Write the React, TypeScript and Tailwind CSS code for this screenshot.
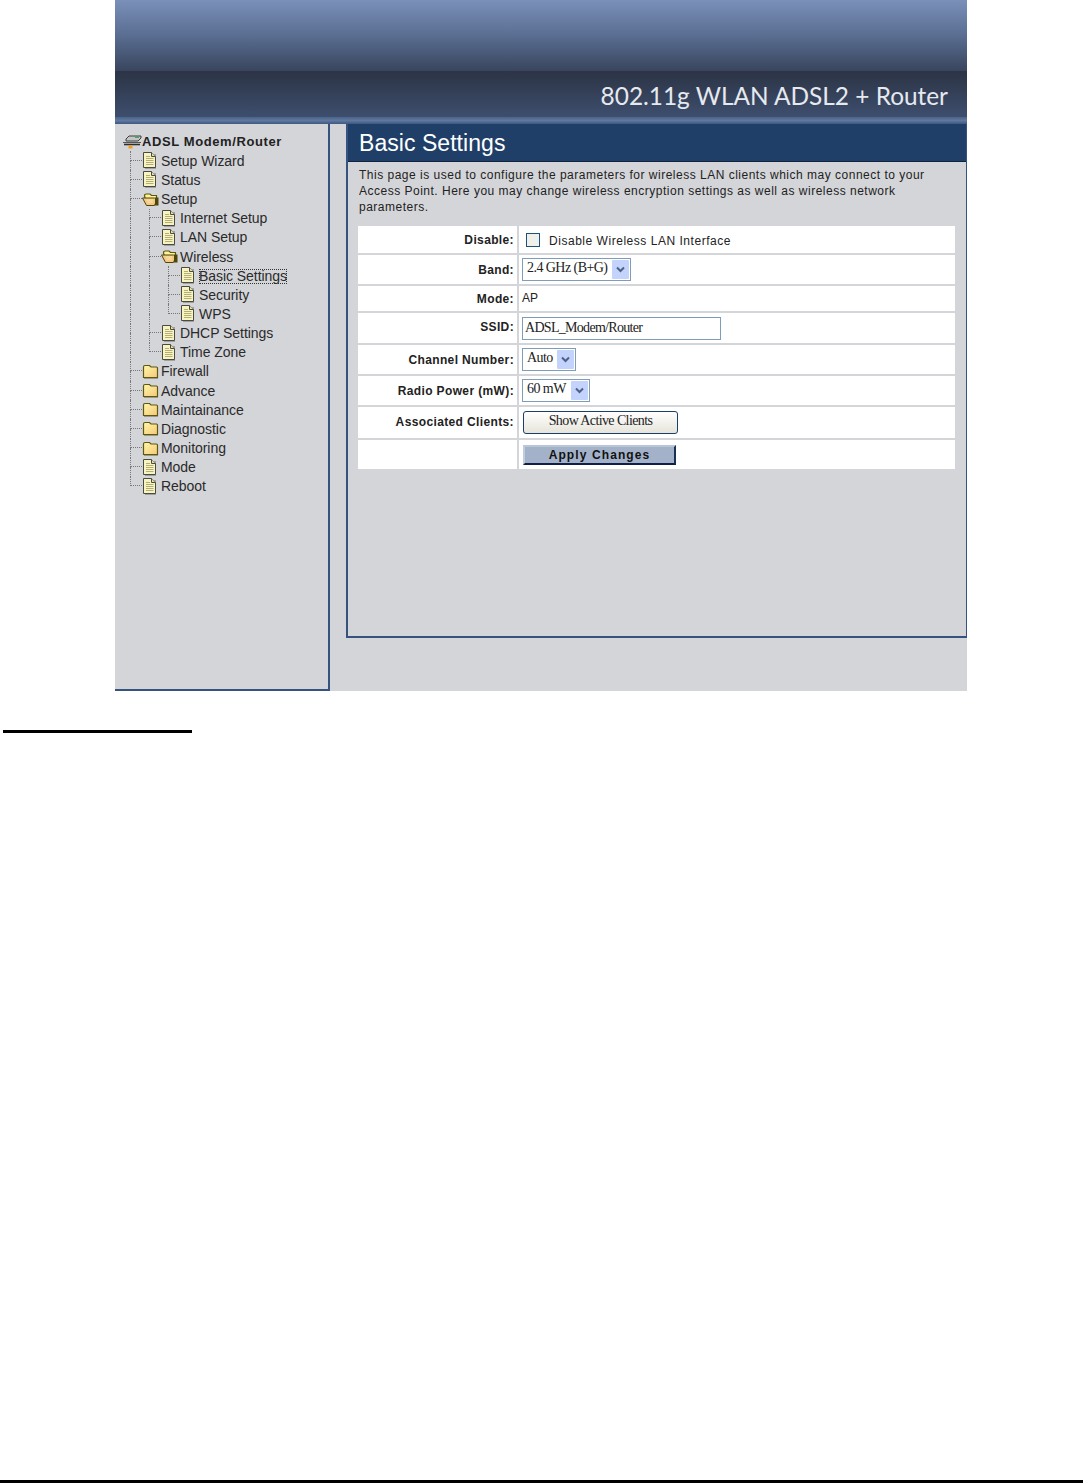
import React from 'react';

type NodeKind = 'root' | 'doc' | 'folder' | 'open';

// guides: one entry per depth, 'line' = pass through, 'tee' = branch, 'end' = last branch
type Guide = 'line' | 'tee' | 'end';

interface TreeRow {
  label: string;
  kind: NodeKind;
  guides: Guide[];
  selected?: boolean;
}

const treeRows: TreeRow[] = [
  { label: 'ADSL Modem/Router', kind: 'root', guides: [] },
  { label: 'Setup Wizard', kind: 'doc', guides: ['tee'] },
  { label: 'Status', kind: 'doc', guides: ['tee'] },
  { label: 'Setup', kind: 'open', guides: ['tee'] },
  { label: 'Internet Setup', kind: 'doc', guides: ['line', 'tee'] },
  { label: 'LAN Setup', kind: 'doc', guides: ['line', 'tee'] },
  { label: 'Wireless', kind: 'open', guides: ['line', 'tee'] },
  { label: 'Basic Settings', kind: 'doc', guides: ['line', 'line', 'tee'], selected: true },
  { label: 'Security', kind: 'doc', guides: ['line', 'line', 'tee'] },
  { label: 'WPS', kind: 'doc', guides: ['line', 'line', 'end'] },
  { label: 'DHCP Settings', kind: 'doc', guides: ['line', 'tee'] },
  { label: 'Time Zone', kind: 'doc', guides: ['line', 'end'] },
  { label: 'Firewall', kind: 'folder', guides: ['tee'] },
  { label: 'Advance', kind: 'folder', guides: ['tee'] },
  { label: 'Maintainance', kind: 'folder', guides: ['tee'] },
  { label: 'Diagnostic', kind: 'folder', guides: ['tee'] },
  { label: 'Monitoring', kind: 'folder', guides: ['tee'] },
  { label: 'Mode', kind: 'doc', guides: ['tee'] },
  { label: 'Reboot', kind: 'doc', guides: ['end'] },
];

const DocIcon = () => (
  <svg width="17" height="19" viewBox="0 0 17 19" className="shrink-0">
    <path d="M3 3H14V18H3Z" fill="#8f8f8f" opacity="0.75" />
    <path d="M1.5 1.5H9.5L13.5 5.5V16.5H1.5Z" fill="#f8f4bf" stroke="#4a4a42" strokeWidth="1" />
    <path d="M9.5 1.5V5.5H13.5" fill="#e4e0a8" stroke="#4a4a42" strokeWidth="1" />
    <path d="M4 5.5H8M4 7.5H11.5M4 9.5H11.5M4 11.5H11.5M4 13.5H11.5" stroke="#b3ae78" strokeWidth="1" />
  </svg>
);

const FolderIcon = () => (
  <svg width="17" height="19" viewBox="0 0 17 19" className="shrink-0">
    <defs>
      <linearGradient id="closedFolder" x1="0" y1="0" x2="1" y2="1">
        <stop offset="0" stopColor="#fff7a8" />
        <stop offset="1" stopColor="#f4c878" />
      </linearGradient>
    </defs>
    <path d="M1.5 5Q1.5 3.5 3 3.5H7.5L9 5H14.5Q15.5 5 15.5 6V15.5H1.5Z" fill="url(#closedFolder)" stroke="#5e5710" strokeWidth="1.2" />
    <path d="M2 16.5H16" stroke="#9a9a8a" strokeWidth="1" />
  </svg>
);

const OpenFolderIcon = () => (
  <svg width="17" height="19" viewBox="0 0 17 19" className="shrink-0">
    <path d="M2.5 6Q2.5 4 4.5 4H8L9.5 5.5H14.5V14.5H5Z" fill="#fff39a" stroke="#5e5710" strokeWidth="1.2" />
    <path d="M0.5 8H12.5L15 9.5L12.5 15.5H4.5Z" fill="#f6c886" stroke="#4d4708" strokeWidth="1" />
    <path d="M13 7.5H16.5V15.5H13Z" fill="#4d4708" />
    <path d="M4.5 10H11M5.5 12H10.5" stroke="#fbe9a6" strokeWidth="1" />
  </svg>
);

const RootIcon = () => (
  <svg width="19" height="19" viewBox="0 0 19 19" className="shrink-0">
    <path d="M3 7L6 4H18V6L15 9H3Z" fill="#c4c6c6" stroke="#3d3d3d" strokeWidth="1" />
    <rect x="12" y="5" width="4" height="1" fill="#35b34a" />
    <path d="M0 10.5H18" stroke="#555" strokeWidth="1" />
    <path d="M1 12.5H17" stroke="#2f2f2f" strokeWidth="1.6" />
    <rect x="5.5" y="13.5" width="4" height="3" fill="#f0a020" />
  </svg>
);

const GuideCell = ({ guide }: { guide: Guide }) => (
  <span className="w-[19px] shrink-0 h-full flex flex-col pl-[7px]">
    <span className={`block h-1/2 border-l border-dotted border-[#777] ${guide !== 'line' ? 'border-b' : ''}`} />
    <span className={`block h-1/2 border-dotted border-[#777] ${guide !== 'end' ? 'border-l' : ''}`} />
  </span>
);

const TreeNode = ({ row }: { row: TreeRow }) => {
  const isRoot = row.kind === 'root';
  return (
    <div className="flex items-center h-[19.17px]">
      {row.guides.map((g, i) => (
        <GuideCell key={i} guide={g} />
      ))}
      {row.kind === 'root' && <RootIcon />}
      {row.kind === 'doc' && <DocIcon />}
      {row.kind === 'folder' && <FolderIcon />}
      {row.kind === 'open' && <OpenFolderIcon />}
      <span
        className={`whitespace-nowrap leading-[15px] ${isRoot ? 'font-bold text-[13px] tracking-[0.6px] text-[#222]' : 'text-[14px] tracking-[-0.05px] text-[#2a2a2a] ml-[2px] mt-px'} ${row.selected ? 'outline outline-1 outline-dotted outline-[#333] -outline-offset-1' : ''}`}
      >
        {row.label}
      </span>
    </div>
  );
};

const SelectBox = ({ value, width }: { value: string; width: string }) => (
  <div className={`flex items-center justify-between border border-[#7f9db9] bg-white h-[23px] pl-[4px] pr-px ${width}`}>
    <span className="font-['Liberation_Serif',serif] text-[14px] tracking-[-0.55px] text-[#222] leading-none -mt-[3px] whitespace-nowrap">{value}</span>
    <span className="w-[17px] h-[19px] bg-[#c3d3fb] flex items-center justify-center rounded-[1px]">
      <svg width="9" height="7" viewBox="0 0 9 7">
        <path d="M1 1.5L4.5 5L8 1.5" fill="none" stroke="#4d6185" strokeWidth="2" />
      </svg>
    </span>
  </div>
);

const FormRow = ({
  label,
  height,
  labelClass = '',
  children,
}: {
  label?: string;
  height: string;
  labelClass?: string;
  children: React.ReactNode;
}) => (
  <div className={`flex gap-[2px] ${height}`}>
    <div className="w-[159px] shrink-0 bg-white flex items-center justify-end pr-[3px] font-bold text-[12px] tracking-[0.37px] text-[#222]">
      <span className={labelClass}>{label}</span>
    </div>
    <div className="flex-1 bg-white flex items-center pl-[3px] text-[12px] text-[#222]">{children}</div>
  </div>
);

export default function App() {
  return (
    <div className="relative h-[1483px] bg-white flex flex-col font-['Liberation_Sans',Arial,sans-serif]">
      <div className="ml-[115px] w-[852px] h-[691px] shrink-0 bg-[#d4d5d9] flex flex-col">
        {/* Banner */}
        <div className="h-[124px] shrink-0 flex flex-col">
          <div className="h-[71px] bg-gradient-to-b from-[#7b90b9] via-[#5a6e92] to-[#39455e]" />
          <div className="h-[46px] bg-gradient-to-b from-[#2c3445] to-[#3d4e6e] flex items-center justify-end pr-[19px]">
            <span className="font-['Lato',sans-serif] text-[24.4px] text-[#e6e9ee] leading-none whitespace-nowrap mt-[4px]">
              802.11g WLAN ADSL2 + Router
            </span>
          </div>
          <div className="h-[7px] bg-gradient-to-b from-[#4c6288] via-[#5f789f] to-[#3f587f]" />
        </div>

        <div className="flex flex-1 items-start">
          {/* Tree menu */}
          <div className="w-[215px] h-[567px] shrink-0 border-r-[2px] border-b-[2px] border-[#34537e] pl-[8px] pt-[8px]">
            {treeRows.map(row => (
              <TreeNode key={row.label} row={row} />
            ))}
          </div>

          {/* Settings panel */}
          <div className="ml-[16px] w-[621px] h-[514px] border-l-[2px] border-b-[2px] border-r border-[#34537e] flex flex-col">
            <div className="h-[38px] bg-[#1f3f68] border-b border-[#10233d] flex items-center pl-[11px] shrink-0">
              <h1 className="text-[23px] tracking-[0.05px] text-white leading-none mt-px">Basic Settings</h1>
            </div>
            <div className="px-[11px] pt-[5px] flex flex-col">
              <p className="text-[12px] leading-[16px] tracking-[0.5px] text-[#222] w-[590px] h-[59px]">
                This page is used to configure the parameters for wireless LAN clients which may connect to your Access Point. Here you may change wireless encryption settings as well as wireless network parameters.
              </p>
              <div className="flex flex-col gap-[2px] -ml-px">
                <FormRow label="Disable:" height="h-[27px]">
                  <input type="checkbox" className="appearance-none w-[14px] h-[14px] border border-[#1c5180] bg-[#f0f0ea] ml-[4px]" readOnly />
                  <span className="ml-[9px] tracking-[0.53px] mt-[2px]">Disable Wireless LAN Interface</span>
                </FormRow>
                <FormRow label="Band:" height="h-[29px]">
                  <SelectBox value="2.4 GHz (B+G)" width="w-[109px]" />
                </FormRow>
                <FormRow label="Mode:" height="h-[25px]">
                  <span className="-mt-[2px]">AP</span>
                </FormRow>
                <FormRow label="SSID:" height="h-[30px]" labelClass="-mt-[3px]">
                  <input
                    readOnly
                    value="ADSL_Modem/Router"
                    className="w-[199px] h-[23px] border border-[#7f9db9] bg-white pl-[2px] font-['Liberation_Serif',serif] text-[14px] tracking-[-0.7px] text-[#222] outline-none"
                  />
                </FormRow>
                <FormRow label="Channel Number:" height="h-[29px]">
                  <SelectBox value="Auto" width="w-[54px]" />
                </FormRow>
                <FormRow label="Radio Power (mW):" height="h-[29px]">
                  <SelectBox value="60 mW" width="w-[68px]" />
                </FormRow>
                <FormRow label="Associated Clients:" height="h-[31px]" labelClass="-mt-[2px]">
                  <button className="w-[155px] h-[23px] ml-px rounded-[3px] border border-[#1c3f6a] bg-gradient-to-b from-white to-[#e6e4da] font-['Liberation_Serif',serif] text-[14px] tracking-[-0.6px] text-[#222] leading-none pb-[4px]">
                    Show Active Clients
                  </button>
                </FormRow>
                <FormRow height="h-[29px]">
                  <button className="w-[153px] h-[20px] ml-px bg-[#a3b2c9] border-2 border-t-[#b9c6da] border-l-[#c0cce0] border-r-[#1b2f55] border-b-[#0f1f45] font-bold text-[12px] tracking-[1.1px] text-[#111] leading-none">
                    Apply Changes
                  </button>
                </FormRow>
              </div>
            </div>
          </div>
        </div>
      </div>

      <div className="mt-[39px] ml-[3px] w-[189px] h-[3px] bg-black shrink-0" />
      <div className="mt-auto h-[3px] bg-black shrink-0" />
    </div>
  );
}
